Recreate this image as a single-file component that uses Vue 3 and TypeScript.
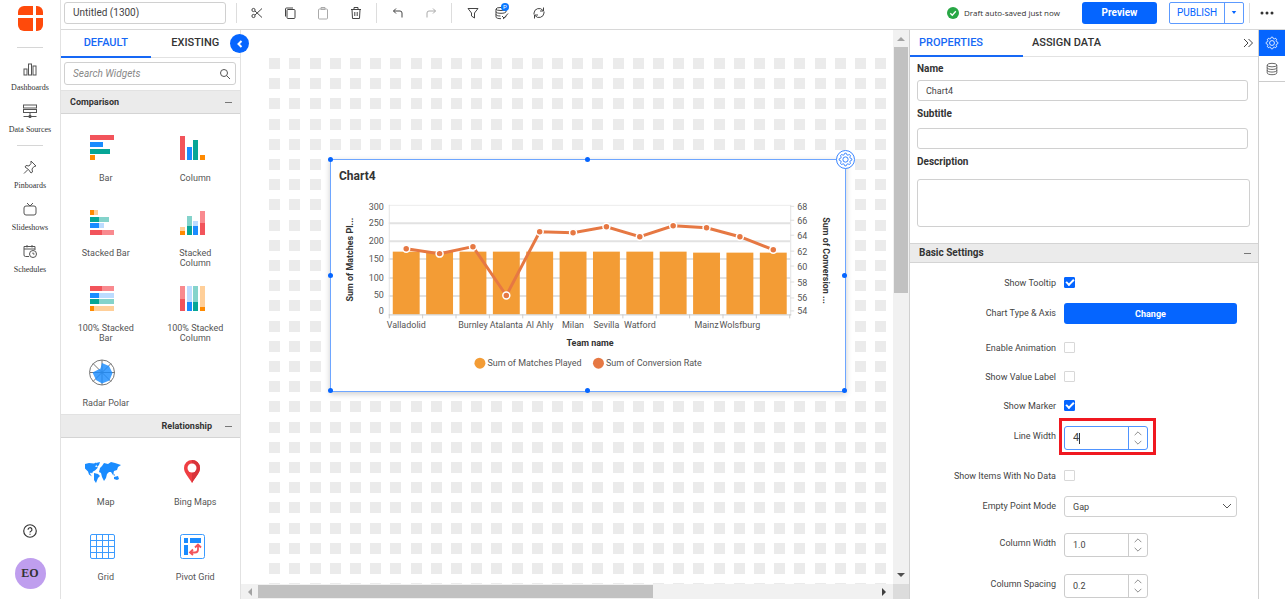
<script setup lang="ts">
import { ref } from 'vue'

interface Shape { x: number; y: number; w: number; h: number; c: string }
interface Widget { name: string; kind: string; shapes?: Shape[] }

const RED = '#f2545b'
const PINK = '#f98a8f'
const BLUE = '#1a8cff'
const SKY = '#bcdcff'
const TEAL = '#06a696'
const MINT = '#84d3cb'
const ORANGE = '#ff8a00'
const PEACH = '#ffcf99'

const s = (x: number, y: number, w: number, h: number, c: string): Shape => ({ x, y, w, h, c })

const comparison: Widget[] = [
  { name: 'Bar', kind: 'rects', shapes: [s(0, 0, 24, 5, RED), s(0, 7, 13, 5, BLUE), s(0, 14, 20, 5, TEAL), s(0, 20, 5, 5, ORANGE)] },
  { name: 'Column', kind: 'rects', shapes: [s(1, 1, 5, 24, RED), s(8, 12, 5, 13, BLUE), s(14, 5, 5, 20, TEAL), s(21, 20, 5, 5, ORANGE)] },
  { name: 'Stacked Bar', kind: 'rects', shapes: [
    s(0, 0, 4, 5, ORANGE), s(4, 0, 4, 5, PEACH), s(0, 7, 9, 5, TEAL), s(9, 7, 10, 5, MINT),
    s(0, 13, 9, 5, BLUE), s(9, 13, 5, 5, SKY), s(0, 20, 12, 5, RED), s(12, 20, 12, 5, PINK)] },
  { name: 'Stacked Column', kind: 'rects', shapes: [
    s(1, 17, 5, 4, PEACH), s(1, 21, 5, 4, ORANGE), s(8, 6, 5, 10, MINT), s(8, 16, 5, 9, TEAL),
    s(14, 11, 5, 5, SKY), s(14, 16, 5, 9, BLUE), s(21, 1, 5, 12, PINK), s(21, 13, 5, 12, RED)] },
  { name: '100% Stacked Bar', kind: 'rects', shapes: [
    s(0, 1, 12, 5, RED), s(12, 1, 12, 5, PINK), s(0, 8, 9, 5, BLUE), s(9, 8, 15, 5, SKY),
    s(0, 14, 9, 5, TEAL), s(9, 14, 15, 5, MINT), s(0, 21, 4, 5, ORANGE), s(4, 21, 20, 5, PEACH)] },
  { name: '100% Stacked Column', kind: 'rects', shapes: [
    s(1, 1, 5, 13, PINK), s(1, 14, 5, 12, RED), s(8, 1, 5, 16, SKY), s(8, 17, 5, 9, BLUE),
    s(14, 1, 5, 16, MINT), s(14, 17, 5, 9, TEAL), s(21, 1, 5, 21, PEACH), s(21, 22, 5, 4, ORANGE)] },
  { name: 'Radar Polar', kind: 'radar' },
]
const relationship: Widget[] = [
  { name: 'Map', kind: 'map' },
  { name: 'Bing Maps', kind: 'pin' },
  { name: 'Grid', kind: 'grid' },
  { name: 'Pivot Grid', kind: 'pivot' },
]
const groups = [
  { title: 'Comparison', end: false, items: comparison },
  { title: 'Relationship', end: true, items: relationship },
]

const title = ref('Untitled (1300)')
const search = ref('')
const chartName = ref('Chart4')
const subtitle = ref('')
const description = ref('')

interface Row { id: string; label: string; type: 'check' | 'button' | 'number' | 'select'; on?: boolean; value?: string; marked?: boolean }
const rows = ref<Row[]>([
  { id: 'tooltip', label: 'Show Tooltip', type: 'check', on: true },
  { id: 'axis', label: 'Chart Type & Axis', type: 'button' },
  { id: 'animation', label: 'Enable Animation', type: 'check', on: false },
  { id: 'valuelabel', label: 'Show Value Label', type: 'check', on: false },
  { id: 'marker', label: 'Show Marker', type: 'check', on: true },
  { id: 'linewidth', label: 'Line Width', type: 'number', value: '4', marked: true },
  { id: 'nodata', label: 'Show Items With No Data', type: 'check', on: false },
  { id: 'empty', label: 'Empty Point Mode', type: 'select', value: 'Gap' },
  { id: 'colwidth', label: 'Column Width', type: 'number', value: '1.0' },
  { id: 'colspacing', label: 'Column Spacing', type: 'number', value: '0.2' },
])
function step(row: Row, dir: number) {
  const v = row.value ?? '0'
  const dec = v.includes('.')
  row.value = dec ? (Number(v) + dir / 10).toFixed(1) : String(Number(v) + dir)
}

/* Chart geometry in the card's own coordinates */
const PITCH = 33.5
const px = (i: number) => 75.5 + PITCH * i
const pointY = [89, 94, 87, 136, 72, 73, 67, 77, 66, 68, 77, 90]
const linePath = pointY.map((y, i) => `${px(i)},${y}`).join(' ')
const gridY = [45, 63, 81, 99, 118, 136]
const leftTicks = [{ t: '300', y: 50 }, { t: '250', y: 66 }, { t: '200', y: 84 }, { t: '150', y: 102 }, { t: '100', y: 121 }, { t: '50', y: 139 }, { t: '0', y: 155 }]
const rightTicks = [{ t: '68', y: 50 }, { t: '66', y: 64 }, { t: '64', y: 79 }, { t: '62', y: 95 }, { t: '60', y: 110 }, { t: '58', y: 126 }, { t: '56', y: 142 }, { t: '54', y: 155 }]
const teams = ['Valladolid', '', 'Burnley', 'Atalanta', 'Al Ahly', 'Milan', 'Sevilla', 'Watford', '', 'Mainz', 'Wolsfburg', '']

const cog = (() => {
  const pts: string[] = []
  for (let i = 0; i < 64; i++) {
    const a = (i / 64) * Math.PI * 2
    const r = 6 + 0.8 * Math.tanh(3 * Math.cos(8 * a))
    pts.push(`${(8 + r * Math.sin(a)).toFixed(2)},${(8 - r * Math.cos(a)).toFixed(2)}`)
  }
  return pts.join(' ')
})()
const handles = ['tl', 'tc', 'ml', 'mr', 'bl', 'bc', 'br']
</script>

<template>
  <div class="app">
    <nav class="rail">
      <svg class="logo" viewBox="0 0 25 25">
        <path d="M6 0h9v9H0V6a6 6 0 0 1 6-6z" /><path d="M18 0h1a6 6 0 0 1 6 6v3h-7z" />
        <path d="M0 12h15v13H6a6 6 0 0 1-6-6z" /><path d="M18 12h7v7a6 6 0 0 1-6 6h-1z" />
      </svg>
      <hr />
      <a href="#"><svg viewBox="0 0 16 16"><rect x="2" y="8" width="3" height="6" /><rect x="6.500" y="3" width="3" height="11" /><rect x="11" y="5" width="3" height="9" /></svg>Dashboards</a>
      <a href="#"><svg viewBox="0 0 16 16"><rect x="1.500" y="2" width="13" height="3" /><rect x="1.500" y="6.500" width="13" height="3" /><path d="M1.500 13.500h13M8 9.500v4M7 12.500h2v2h-2z" /></svg>Data Sources</a>
      <hr class="second" />
      <a href="#"><svg viewBox="0 0 16 16"><path d="M9 2l5 5-2 .5-2 2.500.5 3L9 14 6.500 10.500 3 8l1-1.500 3 .5 2-2.500zM6 10.500L2 14.500" /></svg>Pinboards</a>
      <a href="#"><svg viewBox="0 0 16 16"><rect x="2" y="5" width="12" height="9" rx="2" /><path d="M5 2l3 3 3-3" /></svg>Slideshows</a>
      <a href="#"><svg viewBox="0 0 16 16"><path d="M7 13.500H3.500a1.500 1.500 0 0 1-1.500-1.500V3.500h11V7M2 6h11M5 2v2.500M10 2v2.500" /><circle cx="11" cy="11" r="3.500" /><path d="M11 9.500V11h1.500" /></svg>Schedules</a>
      <span class="grow"></span>
      <button class="help" aria-label="Help"><svg viewBox="0 0 14 14"><circle cx="7" cy="7" r="5.500" /><path d="M5.300 5.800a1.700 1.700 0 1 1 2.500 1.500q-.8.4-.8 1M7 9.300v1" /></svg></button>
      <button class="avatar">EO</button>
    </nav>

    <div class="main">
      <header class="topbar">
        <input v-model="title" class="field title" aria-label="Dashboard title" />
        <div class="tools">
          <i class="sep first"></i>
          <button aria-label="Cut"><svg viewBox="0 0 14 14"><circle cx="3.500" cy="4" r="1.600" /><circle cx="3.500" cy="10" r="1.600" /><path d="M5 5l7 6.500M5 9l7-6.500" /></svg></button>
          <button aria-label="Copy"><svg viewBox="0 0 14 14"><rect x="4" y="3.500" width="8" height="9" rx="1" /><path d="M2.500 10.500V3a1 1 0 0 1 1-1H10" /></svg></button>
          <button aria-label="Paste" class="dim"><svg viewBox="0 0 14 14"><rect x="2.500" y="3" width="9" height="10" rx="1" /><path d="M5 1.500h4v2H5z" /></svg></button>
          <button aria-label="Delete"><svg viewBox="0 0 14 14"><path d="M2 3.500h10M5 3.500v-2h4v2M3 3.500l.5 9h7l.5-9M5.800 6v4M8.200 6v4" /></svg></button>
          <i class="sep"></i>
          <button aria-label="Undo"><svg viewBox="0 0 14 14"><path d="M5 2.500L2.500 5 5 7.500M2.500 5H9a2 2 0 0 1 2 2v4.500" /></svg></button>
          <button aria-label="Redo" class="dim"><svg viewBox="0 0 14 14"><path d="M9 2.500L11.500 5 9 7.500M11.500 5H5a2 2 0 0 0-2 2v4.500" /></svg></button>
          <i class="sep"></i>
          <button aria-label="Filter"><svg viewBox="0 0 14 14"><path d="M2 2.500h10L8.500 7v5L5.500 10V7z" /></svg></button>
          <button aria-label="Parameters" class="params"><svg viewBox="0 0 14 14"><ellipse cx="6" cy="3" rx="5" ry="1.500" /><path d="M1 3v8c0 1 2 1.700 5 1.700M11 3v3M1 5.700c0 1 2 1.600 5 1.600s4-.5 5-1.300M1 8.400c0 1 2 1.600 4.500 1.600M7 10l2 2 4-4.500M8 13l3.500-3" /></svg><b>P</b></button>
          <button aria-label="Refresh"><svg viewBox="0 0 14 14"><path d="M2 8.500V7a5 5 0 0 1 9-2.500M12 5.500V7a5 5 0 0 1-9 2.500M11.500 1.500v3.500H8M2.500 12.500V9H6" /></svg></button>
        </div>
        <span class="grow"></span>
        <svg class="ok" viewBox="0 0 12 12"><circle cx="6" cy="6" r="6" fill="#28a745" /><path d="M3.300 6.200l2 2 3.500-4" fill="none" stroke="#fff" stroke-width="1.300" /></svg>
        <span class="saved">Draft auto-saved just now</span>
        <button class="preview">Preview</button>
        <div class="publish"><button>PUBLISH</button><button aria-label="Publish options" class="drop"><svg viewBox="0 0 8 4"><path d="M1 0h6L4 4z" fill="#0565ff" /></svg></button></div>
        <i class="sep last"></i>
        <button class="more" aria-label="More"><svg viewBox="0 0 14 4"><circle cx="2" cy="2" r="1.500" /><circle cx="7" cy="2" r="1.500" /><circle cx="12" cy="2" r="1.500" /></svg></button>
      </header>

      <div class="body">
        <aside class="widgets">
          <div class="tabs">
            <button class="active">DEFAULT</button><button>EXISTING</button>
          </div>
          <label class="search">
            <input v-model="search" class="field" placeholder="Search Widgets" aria-label="Search Widgets" />
            <svg viewBox="0 0 12 12"><circle cx="5" cy="5" r="3.500" /><path d="M7.500 7.500L11 11" /></svg>
          </label>
          <section v-for="g in groups" :key="g.title">
            <h3 :class="{ end: g.end }"><span>{{ g.title }}</span><button :aria-label="'Collapse ' + g.title"></button></h3>
            <div class="items">
              <button v-for="w in g.items" :key="w.name" class="item">
                <svg v-if="w.kind === 'rects'" viewBox="0 0 26 26"><rect v-for="(r, i) in w.shapes" :key="i" :x="r.x" :y="r.y" :width="r.w" :height="r.h" :fill="r.c" /></svg>
                <svg v-else-if="w.kind === 'radar'" viewBox="0 0 26 26">
                  <g fill="none" stroke="#777"><circle cx="12" cy="12.500" r="12.500" /><path d="M12 0v25M0 12.500h25M3 3.500l18 18M21 3.500l-18 18" /></g>
                  <path d="M12 3l7 3 3.500 7-3 7.500-7.500 3-6-3.500-3.500-7.500 8-4z" fill="#1a8cff" fill-opacity=".82" />
                </svg>
                <svg v-else-if="w.kind === 'map'" class="wide" viewBox="0 0 36 26">
                  <g fill="#1a8cff">
                    <path d="M0 5l4-1 5 .5 2-1 1 2-2 2 3 1-3 3-2 1-1 2-1-1-1 1 2 3-3-2-1-3-3-3v-3z" />
                    <path d="M11 4l4-1-1 3-2 2zM9 14l4 1 2 2-2 2-2 5-2-3v-4z" />
                    <path d="M17 7l2-3 4 1 3-2 4 1 6 2-3 2-1 3-3 1-1 4-2-3-2 0-2 2-1 4-2 3-2-4-1-4-2-1 1-4z" />
                    <path d="M29 18l4-1 1 3-2 1-3-1zM28 14l2 2-1 1z" />
                  </g>
                </svg>
                <svg v-else-if="w.kind === 'pin'" viewBox="0 0 26 26"><path d="M13 24C9 17 5 14 5 9a8 8 0 0 1 16 0c0 5-4 8-8 15z" fill="#ef3e42" /><path d="M13 24V1a8 8 0 0 1 8 8c0 5-4 8-8 15z" fill="#d9333a" /><circle cx="13" cy="9" r="4.500" fill="#fff" /></svg>
                <svg v-else-if="w.kind === 'grid'" viewBox="0 0 26 26"><g stroke="#3b9bff"><rect x=".5" y=".5" width="24" height="24" rx="1.500" /><path d="M6.500.5v24M12.500.5v24M18.500.5v24M.5 6.500h24M.5 12.500h24M.5 18.500h24" /></g></svg>
                <svg v-else viewBox="0 0 26 26"><rect x="1.500" y=".5" width="24" height="24" rx="2" fill="none" stroke="#3b9bff" /><g fill="#1a8cff"><rect x="5" y="4" width="4" height="5" /><rect x="11" y="4" width="11" height="5" /><rect x="5" y="11" width="4" height="10" /></g><path d="M12 18.500h4q3 0 3-3V12M14 15.500l-3 3 3 2.500M16 13.500l3-3 3 3" fill="none" stroke="#f2545b" stroke-width="1.800" /></svg>
                <span>{{ w.name }}</span>
              </button>
            </div>
          </section>
          <button class="collapse" aria-label="Collapse panel"><svg viewBox="0 0 8 8"><path d="M5.500 1L2.500 4l3 3" /></svg></button>
        </aside>

        <main class="canvas">
          <div class="stage">
            <svg class="dots">
              <defs><pattern id="dots" width="101" height="101" patternUnits="userSpaceOnUse">
                <template v-for="y in [0, 20, 40, 61, 81]" :key="y"><rect v-for="x in [0, 20, 41, 61, 81]" :key="x" :x="x" :y="y" width="11" height="11" fill="#ebebeb" /></template>
              </pattern></defs>
              <rect width="100%" height="100%" fill="url(#dots)" />
            </svg>
            <article class="card">
              <h2>Chart4</h2>
              <svg class="chart" viewBox="0 0 516 232">
                <path v-for="(y, i) in gridY" :key="y" :d="`M58 ${y + .5}H461`" :stroke-width="i ? 2 : 1" :stroke="i ? '#e2e2e2' : '#ececec'" />
                <path d="M58.500 45v111M461.500 45v111" stroke="#e4e4e4" />
                <rect v-for="i in 12" :key="'b' + i" :x="62 + PITCH * (i - 1)" :y="i > 9 ? 93 : 92" width="27" :height="i > 9 ? 62 : 63" fill="#f39c35" />
                <path d="M58 155.500H462" stroke="#c8c8c8" />
                <path v-for="i in 13" :key="'t' + i" :d="`M${58.5 + PITCH * (i - 1)} 155v4`" stroke="#ccc" />
                <path v-for="t in rightTicks" :key="'r' + t.t" :d="`M461 ${t.y - 3.5}h4`" stroke="#ddd" />
                <polyline :points="linePath" fill="none" stroke="#e67843" stroke-width="3" />
                <circle v-for="(y, i) in pointY" :key="'p' + i" :cx="px(i)" :cy="y" r="3.500" fill="#e67843" stroke="#fff" stroke-width="1.500" />
                <g class="ticks">
                  <text v-for="t in leftTicks" :key="t.t" x="53" :y="t.y" text-anchor="end">{{ t.t }}</text>
                  <text v-for="t in rightTicks" :key="t.t" x="468" :y="t.y">{{ t.t }}</text>
                  <text v-for="(t, i) in teams" :key="i" :x="px(i)" y="169" text-anchor="middle">{{ t }}</text>
                  <text x="157" y="207">Sum of Matches Played</text>
                  <text x="276" y="207">Sum of Conversion Rate</text>
                </g>
                <g class="axis" text-anchor="middle">
                  <text x="260" y="187">Team name</text>
                  <text transform="translate(22 100) rotate(-90)">Sum of Matches Pl...</text>
                  <text transform="translate(494 101) rotate(90)">Sum of Conversion ...</text>
                </g>
                <circle cx="149.500" cy="204" r="5.500" fill="#f39c35" /><circle cx="268.500" cy="204" r="5.500" fill="#e67843" />
              </svg>
              <i v-for="h in handles" :key="h" class="handle" :class="h"></i>
              <button class="gear" aria-label="Widget settings"><svg viewBox="0 0 16 16"><polygon :points="cog" /><circle cx="8" cy="8" r="2.800" /></svg></button>
            </article>
          </div>
          <div class="vbar"><svg viewBox="0 0 8 4"><path d="M0 4h8L4 0z" fill="#a3a3a3" /></svg><i></i><span class="grow"></span><svg viewBox="0 0 8 4"><path d="M0 0h8L4 4z" fill="#505050" /></svg></div>
          <div class="hbar"><svg viewBox="0 0 4 8"><path d="M4 0v8L0 4z" fill="#a3a3a3" /></svg><i></i><span class="grow"></span><svg viewBox="0 0 4 8"><path d="M0 0v8l4-4z" fill="#404040" /></svg></div>
          <div class="corner"></div>
        </main>

        <aside class="props">
          <div class="tabs">
            <button class="active">PROPERTIES</button><button>ASSIGN DATA</button><span class="grow"></span>
            <button class="hide" aria-label="Hide panel"><svg viewBox="0 0 10 10"><path d="M1 1l4 4-4 4M5.500 1l4 4-4 4" /></svg></button>
          </div>
          <div class="form">
            <label for="name">Name</label><input id="name" v-model="chartName" class="field" />
            <label for="sub">Subtitle</label><input id="sub" v-model="subtitle" class="field" />
            <label for="desc">Description</label><textarea id="desc" v-model="description" class="field"></textarea>
          </div>
          <h3><span>Basic Settings</span><button aria-label="Collapse Basic Settings"></button></h3>
          <div class="settings">
            <div v-for="r in rows" :key="r.id" class="row" :class="r.type">
              <label :for="r.id">{{ r.label }}</label>
              <input v-if="r.type === 'check'" :id="r.id" v-model="r.on" type="checkbox" />
              <button v-else-if="r.type === 'button'" :id="r.id" class="change">Change</button>
              <span v-else-if="r.type === 'select'" class="picker">
                <select :id="r.id" v-model="r.value" class="field"><option>Gap</option><option>Zero</option><option>Average</option></select>
                <svg viewBox="0 0 10 6"><path d="M1 1l4 4 4-4" /></svg>
              </span>
              <span v-else class="stepper" :class="{ marked: r.marked }">
                <input :id="r.id" v-model="r.value" inputmode="decimal" /><i v-if="r.marked" class="caret"></i>
                <span class="spin">
                  <button :aria-label="'Increase ' + r.label" @click="step(r, 1)"><svg viewBox="0 0 10 6"><path d="M1 5l4-4 4 4" /></svg></button>
                  <button :aria-label="'Decrease ' + r.label" @click="step(r, -1)"><svg viewBox="0 0 10 6"><path d="M1 1l4 4 4-4" /></svg></button>
                </span>
              </span>
            </div>
          </div>
        </aside>

        <div class="modes">
          <button class="on" aria-label="Properties"><svg viewBox="0 0 16 16"><polygon :points="cog" /><circle cx="8" cy="8" r="2.800" /></svg></button>
          <button aria-label="Data"><svg viewBox="0 0 16 16"><ellipse cx="8" cy="3.500" rx="5.500" ry="2" /><path d="M2.500 3.500v9c0 1.200 2.500 2 5.500 2s5.500-.8 5.500-2v-9M2.500 6.500c0 1.200 2.500 2 5.500 2s5.500-.8 5.500-2M2.500 9.500c0 1.200 2.500 2 5.500 2s5.500-.8 5.500-2" /></svg></button>
        </div>
      </div>
    </div>
  </div>
</template>

<style>
body { margin: 0; overflow: hidden; }
</style>

<style scoped>
* { box-sizing: border-box; }
.app { display: grid; grid-template-columns: 60px minmax(0, 1fr); height: 100vh; font: 9px/12px Roboto, "Liberation Sans", sans-serif; color: #444; background: #fff; }
button, input, textarea, select { font: inherit; color: inherit; margin: 0; }
button { padding: 0; border: 0; background: none; }
svg { display: block; fill: none; stroke: none; }
.grow { flex: 1; }
.field { border: 1px solid #d0d0d0; border-radius: 3px; background: #fff; outline: 0; padding: 0 8px; }

.rail { display: flex; flex-direction: column; align-items: center; padding: 6px 0 10px; font: 8px/10px "Liberation Serif", serif; color: #333; }
.rail .logo { width: 25px; height: 25px; fill: #ff4a0b; }
.rail hr { width: 26px; height: 1px; border: 0; background: #d6d6d6; margin: 16px 0 13px; }
.rail hr.second { margin: 0 0 13px; flex: none; }
.rail a { display: flex; flex-direction: column; align-items: center; gap: 6px; height: 42px; color: inherit; text-decoration: none; }
.rail a svg, .help svg { width: 16px; height: 16px; stroke: #555; }
.help svg { stroke: #333; }
.help { margin-bottom: 19px; }
.avatar { width: 31px; height: 31px; border-radius: 50%; background: #bf9eee; font: bold 12px/31px "Liberation Serif", serif; color: #333; }

.main { display: flex; flex-direction: column; min-width: 0; min-height: 0; border-left: 1px solid #e2e2e2; }
.topbar { display: flex; align-items: center; height: 30px; padding: 0 11px 4px 3px; border-bottom: 1px solid #d8d8d8; flex: none; }
.title { width: 162px; height: 22px; font-size: 10px; }
.tools { display: flex; align-items: center; }
.tools button { width: 33px; height: 24px; display: grid; place-items: center; position: relative; }
.tools svg { width: 14px; height: 14px; stroke: #444; }
.tools .dim svg { stroke: #aaa; }
.sep { width: 1px; height: 20px; background: #ddd; margin: 0 4px; }
.sep.first { margin: 0 3px 0 10px; }
.tools .params { justify-items: start; padding-left: 6px; }
.params b { position: absolute; top: 2px; left: 12px; width: 8px; height: 8px; border-radius: 50%; background: #0b78ff; color: #fff; font: 6px/8px Roboto, sans-serif; }
.ok { width: 12px; height: 12px; margin-right: 5px; }
.saved { font-family: "Open Sans", sans-serif; font-size: 8px; color: #333; margin-right: 22px; white-space: nowrap; }
.preview, .change { background: #0565ff; color: #fff; font-weight: 700; border-radius: 3px; }
.preview { width: 75px; height: 22px; font-size: 10px; margin-right: 12px; }
.publish { display: flex; width: 75px; height: 22px; border: 1px solid #5c9aff; border-radius: 2px; color: #0565ff; font-size: 10px; }
.publish button { flex: 1; }
.publish .drop { flex: 0 0 19px; display: grid; place-items: center; border-left: 1px solid #5c9aff; }
.drop svg { width: 6px; height: 3px; }
.sep.last { margin: 0 10px 0 5px; }
.more svg { width: 14px; height: 4px; fill: #333; }

.body { flex: 1; display: grid; grid-template-columns: 180px minmax(0, 1fr) 350px 26px; min-height: 0; }
.tabs { display: flex; height: 28px; border-bottom: 1px solid #e2e2e2; font-size: 11px; font-weight: 500; color: #333; }
.tabs button { height: 28px; border-bottom: 2px solid transparent; font-weight: 500; }
.tabs .active { color: #1668f5; border-bottom-color: #1668f5; }
h3 { display: flex; align-items: center; justify-content: space-between; margin: 0; background: #ebebeb; border-bottom: 1px solid #d4d4d4; font-size: 9px; line-height: 12px; font-weight: 700; color: #333; }
h3 button { width: 7px; height: 1px; background: #777; }

.widgets { position: relative; display: flex; flex-direction: column; border-right: 1px solid #e2e2e2; min-height: 0; }
.widgets .tabs button { flex: 1; }
.widgets section { flex: none; }
.search { position: relative; margin: 4px 4px 5px 3px; }
.search input { width: 100%; height: 23px; font-size: 10px; display: block; }
.search input::placeholder { font-style: italic; color: #888; opacity: 1; }
.search svg { position: absolute; right: 5px; top: 6px; width: 12px; height: 12px; stroke: #555; }
.widgets h3 { height: 24px; padding: 0 8px 0 9px; border-top: 1px solid #e2e2e2; }
.widgets h3.end { justify-content: flex-end; gap: 13px; }
.items { display: grid; grid-template-columns: 1fr 1fr; }
.item { display: flex; flex-direction: column; align-items: center; height: 75px; padding-top: 21px; color: #555; }
.item svg { width: 26px; height: 26px; margin-right: 6px; flex: none; overflow: visible; }
.item svg.wide { width: 36px; }
.item span { margin-top: 12px; width: 60px; line-height: 10px; }
.collapse { position: absolute; right: -9px; top: 4px; width: 19px; height: 19px; border-radius: 50%; background: #0565ff; display: grid; place-items: center; z-index: 2; }
.collapse svg { width: 8px; height: 8px; stroke: #fff; stroke-width: 2; }

.canvas { display: grid; grid-template-columns: minmax(0, 1fr) 16px; grid-template-rows: minmax(0, 1fr) 15px; min-width: 0; min-height: 0; }
.stage { position: relative; overflow: hidden; padding: 28px 7px 0 28px; }
.dots { width: 100%; height: 100%; }
.card { position: absolute; left: 89px; top: 129px; width: 516px; height: 233px; background: #fff; border: 1px solid #6ea6ff; box-shadow: 0 2px 6px rgba(0, 0, 0, .2); }
.card h2 { margin: 8px; font-size: 12px; line-height: 16px; font-weight: 700; color: #333; }
.chart { position: absolute; inset: 0; width: 100%; }
.ticks { fill: #555; font-size: 9px; }
.axis { fill: #333; font-size: 9px; font-weight: 700; }
.handle { position: absolute; width: 5px; height: 5px; border-radius: 50%; background: #0565ff; margin: -3px; }
.tl { left: 0; top: 0; } .tc { left: 50%; top: 0; } .ml { left: 0; top: 50%; } .mr { left: 100%; top: 50%; }
.bl { left: 0; top: 100%; } .bc { left: 50%; top: 100%; } .br { left: 100%; top: 100%; }
.gear { position: absolute; right: -10px; top: -10px; width: 19px; height: 19px; border: 1px solid #3b86ff; border-radius: 50%; background: #fff; display: grid; place-items: center; }
.gear svg { width: 15px; height: 15px; stroke: #2a7bff; }
.vbar, .hbar { display: flex; align-items: center; background: #f1f1f1; }
.vbar { flex-direction: column; padding: 7px 0; }
.vbar i { width: 14px; height: 246px; background: #c1c1c1; margin-top: 6px; }
.vbar svg { width: 8px; height: 4px; }
.hbar { padding: 0 7px; }
.hbar i { width: 395px; height: 13px; background: #c1c1c1; margin-left: 6px; }
.hbar svg { width: 4px; height: 8px; }
.corner { background: #dcdcdc; }

.props { border-left: 1px solid #d0d0d0; border-right: 1px solid #d0d0d0; min-height: 0; overflow: hidden; }
.props .tabs { height: 27px; padding-right: 5px; }
.props .tabs button { height: 27px; padding: 0 9px; }
.props .tabs .active { width: 113px; text-align: left; }
.props .tabs .hide { padding: 0; }
.hide svg { width: 10px; height: 10px; stroke: #444; }
.form { display: flex; flex-direction: column; padding: 5px 8px 16px 7px; }
.form label { font-size: 10px; font-weight: 700; color: #333; line-height: 14px; }
.form input { height: 21px; margin: 4px 2px 6px 0; }
.form input + label + input { margin-top: 7px; }
.form textarea { height: 48px; margin-top: 10px; resize: none; }
.props h3 { height: 20px; padding: 0 7px 0 9px; border-top: 1px solid #d4d4d4; font-size: 10px; }
.settings { padding: 5px 21px 0 0; }
.row { display: grid; grid-template-columns: 146px minmax(0, 1fr); column-gap: 8px; align-items: start; color: #444; }
.row > label { text-align: right; }
.row.check { height: 29px; padding-top: 9px; }
.row.button { height: 36px; padding-top: 6px; }
.row.select { height: 37px; padding-top: 6px; }
.row.number { height: 41px; padding-top: 6px; }
.row.button > label, .row.select > label, .row.number > label { padding-top: 4px; }
.row input[type="checkbox"] { appearance: none; width: 11px; height: 11px; border: 1px solid #d8d8d8; border-radius: 1px; display: grid; place-items: center; }
.row input[type="checkbox"]:checked { background: #0565ff; border-color: #0565ff; }
.row input[type="checkbox"]:checked::after { content: ""; width: 6px; height: 3px; border-left: 2px solid #fff; border-bottom: 2px solid #fff; transform: translateY(-1px) rotate(-45deg); }
.change { height: 21px; }
.picker { position: relative; }
.picker select { appearance: none; width: 100%; height: 21px; display: block; }
.picker svg { position: absolute; right: 5px; top: 7px; width: 10px; height: 6px; stroke: #555; }
.stepper { position: relative; display: flex; width: 84px; height: 24px; border: 1px solid #ccc; border-radius: 3px; }
.stepper input { flex: 1; min-width: 0; border: 0; outline: 0; padding: 0 8px; background: none; }
.spin { width: 19px; border-left: 1px solid #ccc; display: flex; flex-direction: column; justify-content: center; gap: 4px; align-items: center; }
.spin svg { width: 10px; height: 5px; stroke: #777; }
.marked, .marked .spin { border-color: #4f94ff; }
.marked input { font-size: 11px; }
.marked::after { content: ""; position: absolute; inset: -9px -9px -6px -6px; border: 3px solid #f01820; pointer-events: none; }
.caret { position: absolute; left: 14px; top: 6px; width: 1px; height: 11px; background: #333; }

.modes button { width: 100%; height: 26px; display: grid; place-items: center; border-bottom: 1px solid #ccc; }
.modes svg { width: 14px; height: 14px; stroke: #555; }
.modes .on { background: #0565ff; border-color: #0565ff; }
.modes .on svg { stroke: #fff; }
</style>
